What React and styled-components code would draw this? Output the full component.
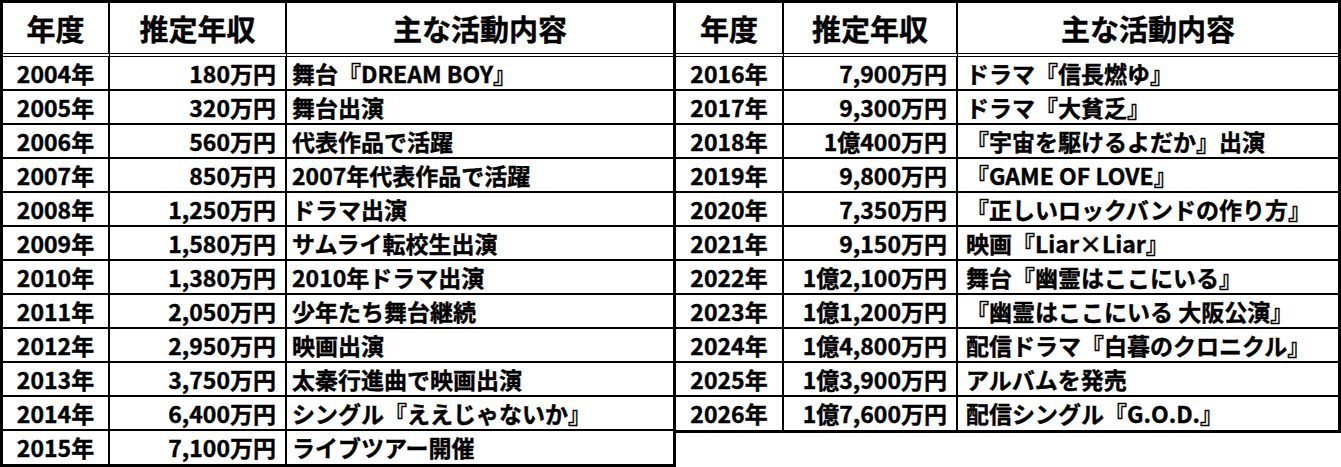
import React from 'react';
import styled, { createGlobalStyle } from 'styled-components';

const GlobalStyle = createGlobalStyle`
  html, body {
    margin: 0;
    padding: 0;
    background: #fff;
  }
  body {
    font-family: "Noto Sans CJK JP", "Noto Sans", sans-serif;
    color: #000;
  }
`;

const Page = styled.div`
  display: flex;
  align-items: flex-start;
  width: 1341px;
`;

const Table = styled.table`
  border-collapse: separate;
  border-spacing: 0;
  table-layout: fixed;
  border: 3px solid #000;
  margin-left: ${props => (props.$overlap ? '-3px' : '0')};
  font-weight: 700;
  text-spacing-trim: space-all;
  -webkit-text-stroke: 0.4px #000;
`;

const HeadCell = styled.th`
  height: 50px;
  padding: 0;
  font-size: 29px;
  font-weight: 700;
  line-height: 1;
  text-align: center;
  border-bottom: 4px double #000;
  border-right: 2px solid #000;
  &:last-child {
    border-right: none;
  }
`;

const Row = styled.tr`
  &:last-child td {
    border-bottom: none;
    height: 33px;
  }
`;

const Cell = styled.td`
  height: 32px;
  padding: 0 ${props => props.$padRight || 0}px 0 ${props => props.$padLeft || 0}px;
  font-size: 23px;
  line-height: 1;
  white-space: nowrap;
  text-align: ${props => props.$align || 'left'};
  border-bottom: 2px solid #000;
  border-right: 2px solid #000;
  &:last-child {
    border-right: none;
  }
`;

const leftRows = [
  ['2004年', '180万円', '舞台『DREAM BOY』'],
  ['2005年', '320万円', '舞台出演'],
  ['2006年', '560万円', '代表作品で活躍'],
  ['2007年', '850万円', '2007年代表作品で活躍'],
  ['2008年', '1,250万円', 'ドラマ出演'],
  ['2009年', '1,580万円', 'サムライ転校生出演'],
  ['2010年', '1,380万円', '2010年ドラマ出演'],
  ['2011年', '2,050万円', '少年たち舞台継続'],
  ['2012年', '2,950万円', '映画出演'],
  ['2013年', '3,750万円', '太秦行進曲で映画出演'],
  ['2014年', '6,400万円', 'シングル『ええじゃないか』'],
  ['2015年', '7,100万円', 'ライブツアー開催'],
];

const rightRows = [
  ['2016年', '7,900万円', 'ドラマ『信長燃ゆ』'],
  ['2017年', '9,300万円', 'ドラマ『大貧乏』'],
  ['2018年', '1億400万円', '『宇宙を駆けるよだか』出演'],
  ['2019年', '9,800万円', '『GAME OF LOVE』'],
  ['2020年', '7,350万円', '『正しいロックバンドの作り方』'],
  ['2021年', '9,150万円', '映画『Liar×Liar』'],
  ['2022年', '1億2,100万円', '舞台『幽霊はここにいる』'],
  ['2023年', '1億1,200万円', '『幽霊はここにいる 大阪公演』'],
  ['2024年', '1億4,800万円', '配信ドラマ『白暮のクロニクル』'],
  ['2025年', '1億3,900万円', 'アルバムを発売'],
  ['2026年', '1億7,600万円', '配信シングル『G.O.D.』'],
];

const IncomeTable = ({ rows, widths, contentPad, overlap }) => (
  <Table $overlap={overlap}>
    <colgroup>
      {widths.map((w, i) => <col key={i} style={{ width: w }} />)}
    </colgroup>
    <thead>
      <tr>
        <HeadCell>年度</HeadCell>
        <HeadCell>推定年収</HeadCell>
        <HeadCell>主な活動内容</HeadCell>
      </tr>
    </thead>
    <tbody>
      {rows.map(([year, income, activity]) => (
        <Row key={year}>
          <Cell $align="center">{year}</Cell>
          <Cell $align="right" $padRight={9}>{income}</Cell>
          <Cell $padLeft={contentPad}>{activity}</Cell>
        </Row>
      ))}
    </tbody>
  </Table>
);

const App = () => (
  <>
    <GlobalStyle />
    <Page>
      <IncomeTable rows={leftRows} widths={[107, 177, 386]} contentPad={5} />
      <IncomeTable rows={rightRows} widths={[108, 174, 380]} contentPad={8} overlap />
    </Page>
  </>
);

export default App;
